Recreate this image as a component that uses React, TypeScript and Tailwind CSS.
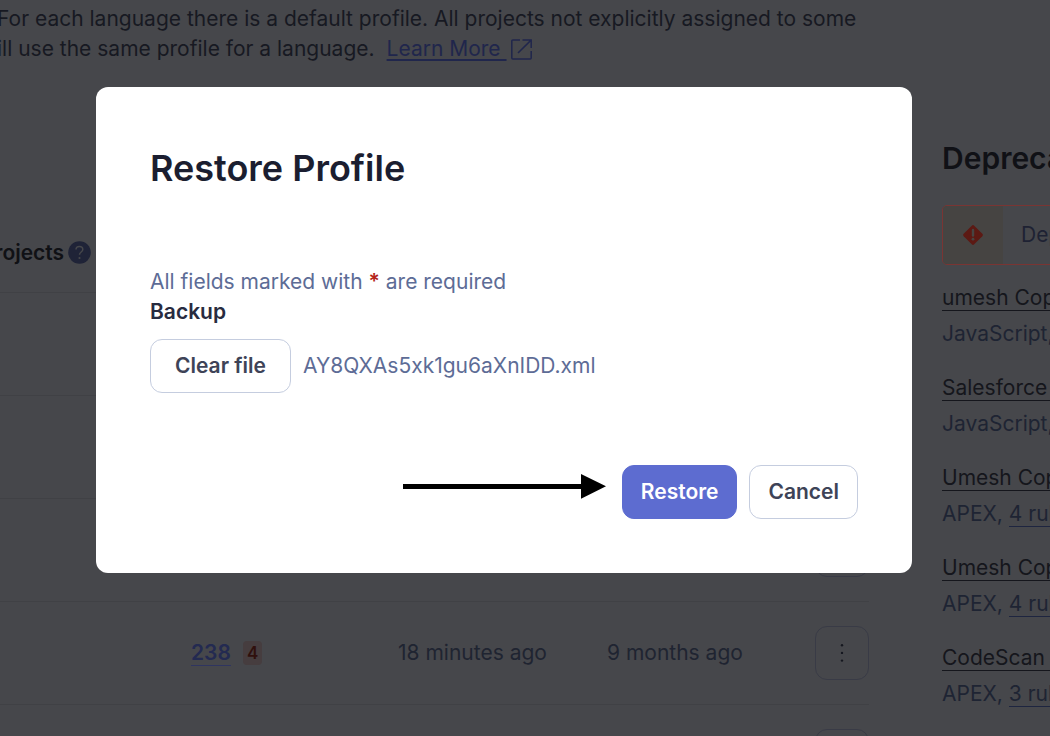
import { ReactNode } from "react";

const deprecated = [
  { name: "umesh Copy", language: "JavaScript", rules: "12 rules" },
  { name: "Salesforce Copy", language: "JavaScript", rules: "8 rules" },
  { name: "Umesh Copy", language: "APEX", rules: "4 rules" },
  { name: "Umesh Copy", language: "APEX", rules: "4 rules" },
  { name: "CodeScan Copy", language: "APEX", rules: "3 rules" },
];

function ExternalIcon() {
  return (
    <svg className="h-[21px] w-[21px]" viewBox="0 0 21 21" fill="none" stroke="currentColor" strokeWidth="1.5" aria-hidden="true">
      <path d="M9 1H1.8a1 1 0 0 0-1 1v17a1 1 0 0 0 1 1h17.4a1 1 0 0 0 1-1v-7" />
      <path d="M11.5 1h8.7v8M19.8 1.4 7 14" />
    </svg>
  );
}

function MenuButton() {
  return (
    <button
      type="button"
      aria-label="Actions"
      className="flex h-[54px] w-[54px] items-center justify-center rounded-xl border border-[#393b46]"
    >
      <svg className="h-5 w-1" viewBox="0 0 4 20" fill="#15171f" aria-hidden="true">
        <circle cx="2" cy="2.2" r="1.2" />
        <circle cx="2" cy="9.9" r="1.2" />
        <circle cx="2" cy="17.6" r="1.2" />
      </svg>
    </button>
  );
}

function Row({ rules, updated, used }: { rules?: ReactNode; updated?: string; used?: string }) {
  return (
    <tr className="h-[103px] border-b border-[#404145]">
      <td className="w-[191px]" />
      <td className="w-[207px]">{rules}</td>
      <td className="w-[209px]">{updated}</td>
      <td>{used}</td>
      <td className="w-[54px]">
        <MenuButton />
      </td>
    </tr>
  );
}

function ProfilesTable() {
  return (
    <table className="w-full table-fixed border-collapse text-left text-[#1f2431]">
      <thead>
        <tr className="h-20 border-b border-[#404145]">
          <th scope="col" className="w-[191px] pt-0.5 font-semibold text-[#101115]">
            <div className="-ml-[19px] flex items-center gap-1">
              Projects
              <svg className="h-[23px] w-[23px] shrink-0" viewBox="0 0 23 23" role="img" aria-label="Help">
                <circle cx="11.5" cy="11.5" r="11.3" fill="#1f2337" />
                <path
                  d="M8 8.6c0-2 1.4-3.2 3.4-3.2s3.4 1.2 3.4 3c0 2.5-3.3 2.7-3.3 5.3"
                  fill="none"
                  stroke="#46474b"
                  strokeWidth="1.5"
                />
                <circle cx="11.5" cy="17" r="1.1" fill="#46474b" />
              </svg>
            </div>
          </th>
          <th scope="col" aria-label="Rules" className="w-[207px]" />
          <th scope="col" aria-label="Updated" className="w-[209px]" />
          <th scope="col" aria-label="Used" />
          <th scope="col" aria-label="Actions" className="w-[54px]" />
        </tr>
      </thead>
      <tbody>
        <Row />
        <Row />
        <Row />
        <Row
          rules={
            <div className="flex items-center gap-3">
              <a href="#rules" className="border-b border-[#2f3560] font-semibold leading-[25px] text-[#232a51]">
                238
              </a>
              <a href="#deprecated" className="rounded-sm bg-[#463d3f] px-1 text-[17px] leading-6 font-semibold text-[#30100d]">
                4
              </a>
            </div>
          }
          updated="18 minutes ago"
          used="9 months ago"
        />
        <Row />
      </tbody>
    </table>
  );
}

function DeprecatedPanel() {
  return (
    <aside className="w-[108px] shrink-0 overflow-hidden">
      <div className="w-[420px]">
        <h2 className="text-[30px] leading-9 font-semibold text-[#101116]">Deprecated Rules</h2>
        <div className="mt-[29px] flex h-[60px] items-center rounded-[5px] border border-[#7a3533] text-[#1e2233]">
          <div className="flex w-[60px] shrink-0 items-center justify-center self-stretch rounded-l-[4px] bg-[#464442]">
            <svg className="h-5 w-5" viewBox="0 0 20 20" aria-hidden="true">
              <path d="M8.8.7a1.7 1.7 0 0 1 2.4 0l8.1 8.1a1.7 1.7 0 0 1 0 2.4l-8.1 8.1a1.7 1.7 0 0 1-2.4 0L.7 11.2a1.7 1.7 0 0 1 0-2.4z" fill="#5c1913" />
              <path d="M10 5v5.6" stroke="#464442" strokeWidth="2.4" strokeLinecap="round" />
              <circle cx="10" cy="14.2" r="1.4" fill="#464442" />
            </svg>
          </div>
          <span className="pl-[18px]">Deprecated rules</span>
        </div>
        <ul className="mt-[18px] flex flex-col gap-6 text-[#1e2433]">
          {deprecated.map((item, index) => (
            <li key={index} className="flex flex-col gap-1.5">
              <div>
                <a href="#profile" className="border-b border-[#15161c] text-[#15161c]">
                  {item.name}
                </a>
              </div>
              <div>
                {item.language},{" "}
                <a href="#profile-rules" className="border-b border-[#1e2540]">
                  {item.rules}
                </a>
              </div>
            </li>
          ))}
        </ul>
      </div>
    </aside>
  );
}

function RestoreDialog() {
  return (
    <div className="absolute inset-0 flex items-start pt-[87px] pr-[138px] pl-24">
      <div
        role="dialog"
        aria-modal="true"
        aria-labelledby="restore-title"
        className="w-full max-w-[816px] rounded-xl bg-white p-[54px] text-[#5d6c96]"
      >
        <h1 id="restore-title" className="text-4xl leading-[54px] font-semibold text-[#1b1e30]">
          Restore Profile
        </h1>
        <p className="mt-[72px]">
          All fields marked with <span className="font-semibold text-[#b42318]">*</span> are required
        </p>
        <p id="backup-label" className="font-semibold text-[#282b40]">
          Backup
        </p>
        <div role="group" aria-labelledby="backup-label" className="mt-3 flex items-center gap-3">
          <button
            type="button"
            className="h-[54px] rounded-xl border border-[#c5cddf] px-6 font-semibold text-[#3e4357]"
          >
            Clear file
          </button>
          <span>AY8QXAs5xk1gu6aXnIDD.xml</span>
        </div>
        <div className="mt-[72px] flex justify-end">
          <div className="relative flex gap-3">
            <svg
              className="absolute top-[9px] right-full mr-4 h-[25px] w-[203px]"
              viewBox="0 0 203 25"
              fill="#000"
              aria-hidden="true"
            >
              <path d="M0 10h178V0l25 12.2L178 24.7V15H0z" />
            </svg>
            <button
              type="submit"
              className="h-[54px] rounded-xl border border-[#5d6cd0] bg-[#5d6cd0] px-[18px] font-semibold text-white"
            >
              Restore
            </button>
            <button
              type="button"
              className="h-[54px] rounded-xl border border-[#c5cddf] px-[18px] font-semibold text-[#3e4357]"
            >
              Cancel
            </button>
          </div>
        </div>
      </div>
    </div>
  );
}

export default function App() {
  return (
    <div className="relative h-screen overflow-hidden bg-[#46474b] font-[Inter,sans-serif] text-[21px] leading-[30px]">
      <p className="-ml-[3px] pt-1 whitespace-nowrap text-[#171922]">
        For each language there is a default profile. All projects not explicitly assigned to some
        <br />
        ill use the same profile for a language.
        <a href="#learn" className="ml-3 inline-flex items-center gap-1 text-[#20264c]">
          <span className="whitespace-pre underline decoration-2 underline-offset-[3px]">Learn More </span>
          <ExternalIcon />
        </a>
      </p>
      <div className="flex gap-[73px] pt-[76px]">
        <div className="min-w-0 flex-1 pt-[72px]">
          <ProfilesTable />
        </div>
        <DeprecatedPanel />
      </div>
      <RestoreDialog />
    </div>
  );
}
